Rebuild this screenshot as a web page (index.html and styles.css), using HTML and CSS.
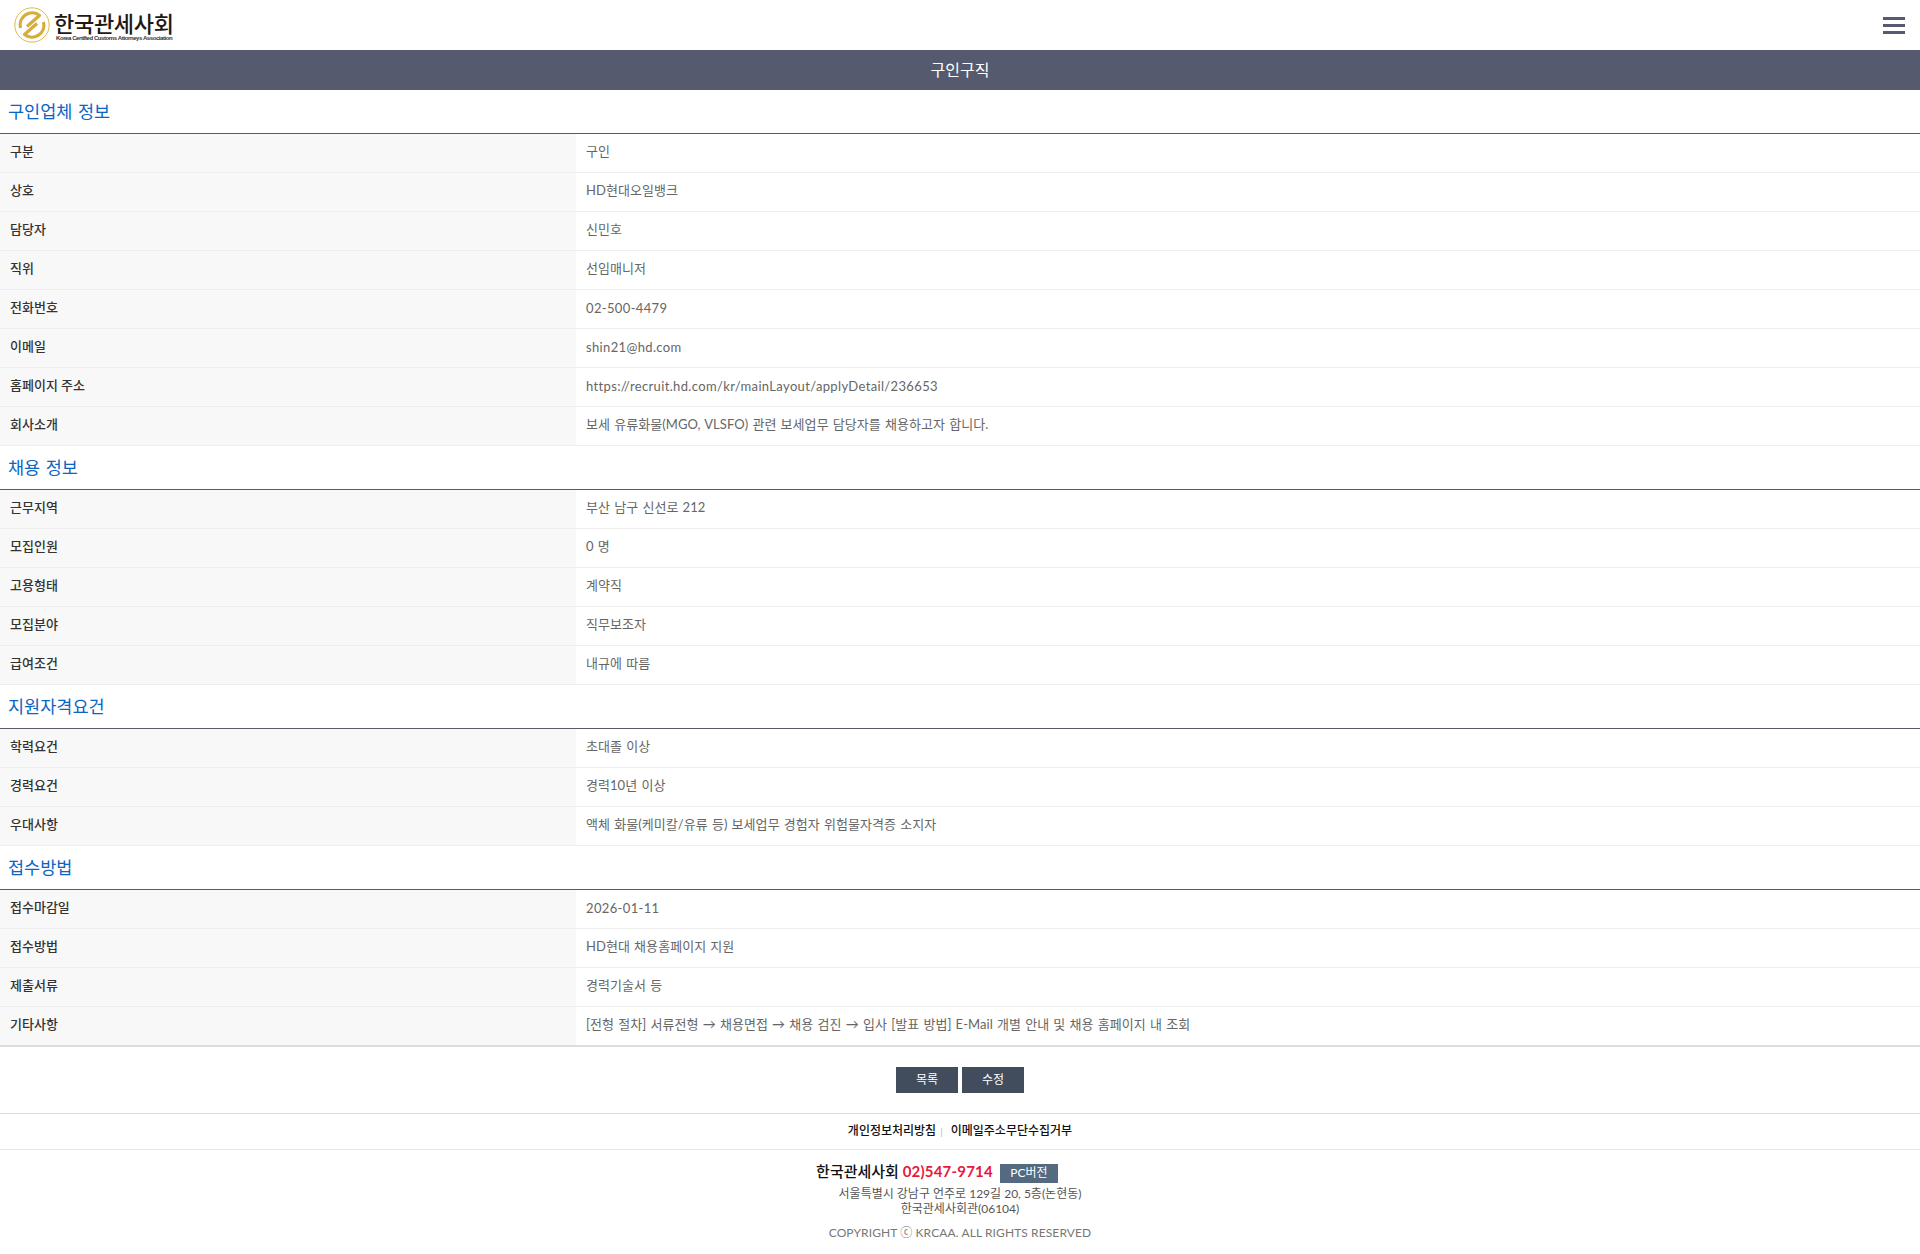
FILE: index.html
```html
<!DOCTYPE html>
<html lang="ko">
<head>
    <meta charset="UTF-8">
    <title>구인구직</title>
    <link rel="stylesheet" href="styles.css">
</head>
<body>
    <header class="top-bar">
        <a class="logo" href="#">
            <svg class="logo-mark" viewBox="0 0 36 36" width="36" height="36" fill="none">
                <circle cx="18" cy="18" r="17.2" stroke="#dcb94e" stroke-width="1"/>
                <g stroke="#d6ad38" stroke-width="3.2" stroke-linejoin="round">
                    <path d="M6.5 21 A12 12 0 0 1 25.5 8.5 L13 19.5"/>
                    <path d="M29.5 15 A12 12 0 0 1 10.5 27.5 L23 16.5"/>
                </g>
            </svg>
            <span class="logo-text">
                <span class="logo-name">한국관세사회</span>
                <span class="logo-sub">Korea Certified Customs Attorneys Association</span>
            </span>
        </a>
        <div class="menu-btn"><span></span><span></span><span></span></div>
    </header>
    <div class="page-title">구인구직</div>

    <h2 class="section-title">구인업체 정보</h2>
    <table class="info-table">
        <tr><th>구분</th><td>구인</td></tr>
        <tr><th>상호</th><td>HD현대오일뱅크</td></tr>
        <tr><th>담당자</th><td>신민호</td></tr>
        <tr><th>직위</th><td>선임매니저</td></tr>
        <tr><th>전화번호</th><td class="latin">02-500-4479</td></tr>
        <tr><th>이메일</th><td class="latin">shin21@hd.com</td></tr>
        <tr><th>홈페이지 주소</th><td class="latin">https://recruit.hd.com/kr/mainLayout/applyDetail/236653</td></tr>
        <tr><th>회사소개</th><td>보세 유류화물(MGO, VLSFO) 관련 보세업무 담당자를 채용하고자 합니다.</td></tr>
    </table>

    <h2 class="section-title">채용 정보</h2>
    <table class="info-table">
        <tr><th>근무지역</th><td>부산 남구 신선로 212</td></tr>
        <tr><th>모집인원</th><td>0 명</td></tr>
        <tr><th>고용형태</th><td>계약직</td></tr>
        <tr><th>모집분야</th><td>직무보조자</td></tr>
        <tr><th>급여조건</th><td>내규에 따름</td></tr>
    </table>

    <h2 class="section-title">지원자격요건</h2>
    <table class="info-table">
        <tr><th>학력요건</th><td>초대졸 이상</td></tr>
        <tr><th>경력요건</th><td>경력10년 이상</td></tr>
        <tr><th>우대사항</th><td>액체 화물(케미칼/유류 등) 보세업무 경험자 위험물자격증 소지자</td></tr>
    </table>

    <h2 class="section-title">접수방법</h2>
    <table class="info-table last">
        <tr><th>접수마감일</th><td class="latin">2026-01-11</td></tr>
        <tr><th>접수방법</th><td>HD현대 채용홈페이지 지원</td></tr>
        <tr><th>제출서류</th><td>경력기술서 등</td></tr>
        <tr><th>기타사항</th><td>[전형 절차] 서류전형 → 채용면접 → 채용 검진 → 입사 [발표 방법] E-Mail 개별 안내 및 채용 홈페이지 내 조회</td></tr>
    </table>

    <div class="btn-row">
        <a class="btn" href="#">목록</a>
        <a class="btn" href="#">수정</a>
    </div>

    <footer class="footer">
        <div class="footer-links">
            <a href="#">개인정보처리방침</a><span class="sep">|</span><a href="#">이메일주소무단수집거부</a>
        </div>
        <div class="footer-info">
            <div class="footer-name">한국관세사회 <em>02)547-9714</em><a class="pc-btn" href="#">PC버전</a></div>
            <p>서울특별시 강남구 언주로 129길 20, 5층(논현동)<br>한국관세사회관(06104)</p>
            <p class="copyright">COPYRIGHT ⓒ KRCAA. ALL RIGHTS RESERVED</p>
        </div>
    </footer>
</body>
</html>
```
FILE: styles.css
```css
* {
    box-sizing: border-box;
}
body {
    margin: 0;
    background: #fff;
    color: #666;
    font-family: Lato, "Noto Sans CJK KR", sans-serif;
    font-size: 13px;
}
a {
    color: inherit;
    text-decoration: none;
}
.top-bar {
    height: 50px;
    display: flex;
    align-items: center;
    justify-content: space-between;
    padding: 0 14px 0 14px;
}
.logo {
    display: flex;
    align-items: center;
    gap: 4px;
}
.logo-text {
    display: flex;
    flex-direction: column;
    padding-top: 1px;
}
.logo-name {
    color: #231815;
    font-family: "Noto Sans CJK KR", sans-serif;
    font-size: 22px;
    font-weight: 500;
    line-height: 24px;
    letter-spacing: -0.3px;
}
.logo-sub {
    padding-left: 2px;
    color: #333;
    font-family: "Liberation Sans", sans-serif;
    font-size: 6px;
    font-weight: bold;
    line-height: 8px;
    letter-spacing: -0.42px;
    white-space: nowrap;
}
.menu-btn {
    display: flex;
    flex-direction: column;
    gap: 4px;
    width: 22px;
    margin-right: 1px;
}
.menu-btn span {
    height: 3px;
    background: #555a6e;
}
.page-title {
    height: 40px;
    line-height: 40px;
    background: #555a6e;
    color: #fff;
    text-align: center;
    font-size: 16px;
}
.section-title {
    height: 44px;
    margin: 0;
    padding-left: 8px;
    line-height: 44px;
    border-bottom: 1px solid #555a6e;
    color: #0a66c2;
    font-size: 17.5px;
    font-weight: 400;
    word-spacing: 1px;
}
.info-table {
    width: 100%;
    border-collapse: separate;
    border-spacing: 0;
    table-layout: fixed;
}
.info-table th,
.info-table td {
    height: 39px;
    padding: 0 10px 5px;
    border-bottom: 1px solid #eee;
    font-size: 13px;
}
.info-table th {
    width: 576px;
    background: #f8f8f8;
    color: #333;
    font-weight: 500;
    text-align: left;
}
.info-table td {
    color: #666;
    letter-spacing: 0.05px;
    word-spacing: 0.8px;
}
.info-table td.latin {
    padding-bottom: 3px;
    letter-spacing: 0.35px;
}
.info-table.last tr:last-child th,
.info-table.last tr:last-child td {
    height: 40px;
    border-bottom: 2px solid #ddd;
}
.btn-row {
    display: flex;
    justify-content: center;
    gap: 4px;
    padding: 20px 0 20px;
    border-bottom: 1px solid #ddd;
}
.btn {
    width: 62px;
    height: 26px;
    line-height: 26px;
    background: #414c5c;
    color: #fff;
    font-size: 12px;
    text-align: center;
}
.footer {
    text-align: center;
}
.footer-links {
    height: 36px;
    line-height: 33px;
    border-bottom: 1px solid #e5e5e5;
    color: #111;
    font-size: 12px;
    font-weight: 500;
}
.footer-links .sep {
    margin: 0 8px 0 4px;
    color: #bbb;
    font-weight: 400;
    font-size: 10px;
}
.footer-info {
    padding-top: 11px;
}
.footer-name {
    margin-bottom: 3px;
    padding-right: 46px;
    color: #111;
    font-size: 15px;
    font-weight: 500;
    line-height: 20px;
}
.footer-name em {
    color: #e8173c;
    font-style: normal;
    font-weight: 700;
    letter-spacing: 0.2px;
}
.pc-btn {
    display: inline-block;
    width: 58px;
    height: 19px;
    margin-left: 7px;
    background: #546a80;
    color: #fff;
    font-size: 12px;
    font-weight: 400;
    line-height: 18px;
    vertical-align: middle;
}
.footer-info p {
    margin: 0;
    color: #555;
    font-size: 12px;
    line-height: 15px;
}
.footer-info p.copyright {
    margin-top: 9px;
    color: #777;
    letter-spacing: 0.1px;
}
```
